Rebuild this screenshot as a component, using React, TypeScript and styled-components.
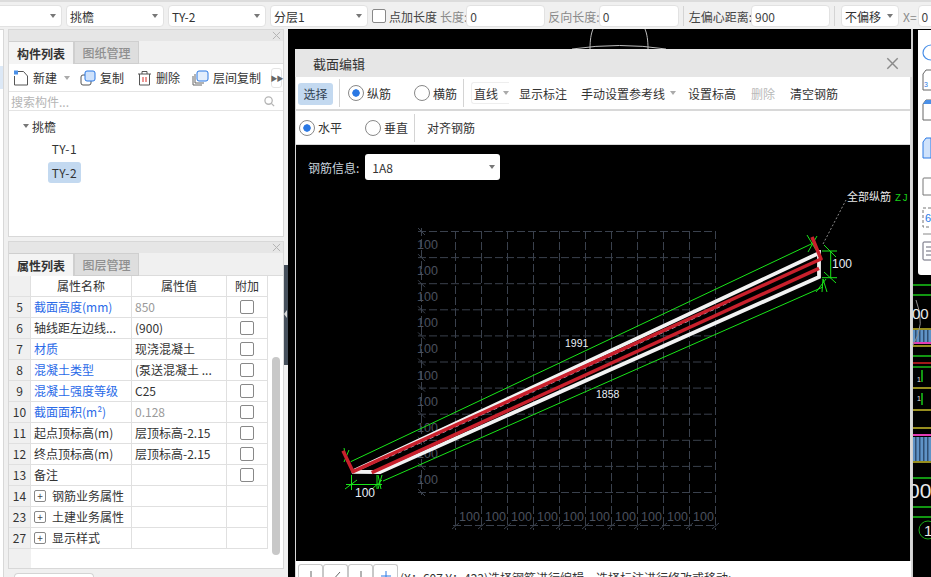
import React from 'react';
import styled, { createGlobalStyle } from 'styled-components';

const Global = createGlobalStyle`
  html, body { margin: 0; padding: 0; background: #f0f0f0; }
  * { box-sizing: border-box; }
  body { font-family: "Noto Sans CJK SC", "Liberation Sans", sans-serif; font-size: 12px; color: #333; }
`;

const Page = styled.div`
  width: 931px; height: 577px; overflow: hidden; display: flex; flex-direction: column; background: #f0f0f0;
`;
const TopBar = styled.div`
  height: 29px; flex: none; display: flex; align-items: center; gap: 4px; padding-top: 1px;
  border-top: 2px solid #dcdcdc; background: #f0f0f0; white-space: nowrap; margin-top: 0;
`;
const Sel = styled.div<{ $w: number }>`
  width: ${p => p.$w}px; height: 22px; flex: none; background: #fff; border: 1px solid #e2e2e2; border-radius: 4px;
  display: flex; align-items: center; justify-content: space-between; padding: 0 5px 0 3px; font-size: 12px; color: #333;
`;
const FirstSel = styled(Sel)`border-left: none; border-radius: 0 4px 4px 0;`;
const OffsetSel = styled(Sel)`margin-left: 2px;`;
const Caret = styled.i<{ $light?: boolean }>`
  width: 0; height: 0; border-left: 3px solid transparent; border-right: 3px solid transparent; border-top: 4px solid ${p => (p.$light ? '#aaa' : '#777')}; flex: none;
`;
const Check = styled.span<{ $size?: number }>`
  display: inline-block; width: ${p => p.$size ?? 13}px; height: ${p => p.$size ?? 13}px; background: #fff; border: 1px solid #888; border-radius: 2px; flex: none;
`;
const Lbl = styled.span<{ $muted?: boolean }>`
  color: ${p => (p.$muted ? '#8a8a8a' : '#444')}; font-size: 12px; flex: none; margin-right: -1px;
`;
const Inp = styled.div<{ $w: number }>`
  width: ${p => p.$w}px; height: 22px; flex: none; background: #fff; border: 1px solid #e2e2e2; border-radius: 4px; padding: 0 3px; display: flex; align-items: center; font-size: 12px; color: #444;
`;
const SmallInp = styled(Inp)`margin-left: 2px;`;
const VSep = styled.i<{ $h?: number }>`
  width: 1px; height: ${p => p.$h ?? 20}px; background: #d4d4d4; flex: none; display: block;
`;
const CheckGroup = styled.div`display: flex; align-items: center; gap: 3px; flex: none;`;
const LabelledField = styled.div<{ $ml?: number }>`display: flex; align-items: center; flex: none; margin-left: ${p => p.$ml ?? 0}px;`;

const Main = styled.div`flex: 1; display: flex; min-height: 0;`;
const Sidebar = styled.div`width: 288px; flex: none; display: flex; background: #f0f0f0;`;
const LeftStrip = styled.div`
  width: 4px; flex: none; background: #fff; border-right: 1px solid #d8d8d8; border-top: 1px solid #d8d8d8; padding-top: 36px;
`;
const StripMark = styled.div`height: 23px; width: 3px; background: #dce8f6;`;
const Panels = styled.div`flex: none; width: 276px; margin-left: 4px; display: flex; flex-direction: column; gap: 4px;`;
const Grip = styled.div`width: 4px; flex: none; display: flex; flex-direction: column; align-items: center; padding-top: 236px; margin-left: 0;`;
const GripBar = styled.div`
  width: 4px; height: 100px; background: #46505c; position: relative;
  &::after { content: ''; position: absolute; left: 0; top: 45px; border-right: 3px solid #d8d8d8; border-top: 4px solid transparent; border-bottom: 4px solid transparent; }
`;
const Panel = styled.section<{ $h: number }>`
  height: ${p => p.$h}px; flex: none; border: 1px solid #d8d8d8; background: #fff; display: flex; flex-direction: column;
`;
const PanelHead = styled.div`
  height: 11px; flex: none; background: #e6e6e6; display: flex; justify-content: flex-end; align-items: center; padding-right: 2px;
`;
const Tabs = styled.div`height: 23px; flex: none; display: flex; background: #f0f0f0; border-bottom: 1px solid #dcdcdc;`;
const Tab = styled.div<{ $active?: boolean }>`
  width: 65px; height: 23px; flex: none; display: flex; align-items: center; justify-content: center;
  font-size: 12px; font-weight: ${p => (p.$active ? 700 : 500)}; color: ${p => (p.$active ? '#333' : '#8f8f8f')};
  background: ${p => (p.$active ? '#f4f4f4' : '#dedede')}; border: 1px solid #cfcfcf; border-left: ${p => (p.$active ? 'none' : '1px solid #cfcfcf')};
  border-bottom: ${p => (p.$active ? 'none' : '1px solid #cfcfcf')};
`;
const ActionBar = styled.div`
  height: 28px; flex: none; display: flex; align-items: center; padding-left: 4px; border-bottom: 1px solid #e4e4e4; position: relative; white-space: nowrap;
`;
const Action = styled.div<{ $gap?: number }>`
  display: flex; align-items: center; gap: 4px; margin-right: ${p => p.$gap ?? 12}px; font-size: 12px; color: #333;
`;
const NewCaret = styled(Caret)`margin-left: 3px;`;
const More = styled.div`
  position: absolute; left: 262px; top: 4px; width: 11px; height: 20px; border: 1px solid #e4e4e4; border-radius: 3px; color: #666; font-size: 7px; display: flex; align-items: center; justify-content: center; background: #fff; letter-spacing: -1px;
`;
const Search = styled.div`
  height: 19px; flex: none; display: flex; align-items: center; justify-content: space-between; padding: 0 8px 0 2px; color: #b5b5b5; font-size: 12px; border-bottom: 1px solid #e4e4e4;
`;
const Tree = styled.div`flex: 1; padding: 3px 0 0 14px; display: flex; flex-direction: column; color: #333; font-size: 12px;`;
const TreeRoot = styled.div`height: 24px; display: flex; align-items: center; gap: 3px;`;
const TreeLeaf = styled.div<{ $sel?: boolean }>`
  width: 33px; height: 21px; margin: 0 0 3px 25px; display: flex; align-items: center; justify-content: center; border-radius: 3px; letter-spacing: 0.5px; background: ${p => (p.$sel ? '#c3d9f0' : 'transparent')};
`;

const Body = styled.div`flex: 1; display: flex; min-height: 0;`;
const Table = styled.div`
  width: 259px; flex: none; display: grid; grid-template-columns: 22px 101px 95px 41px; grid-auto-rows: 21px; align-content: start; background: linear-gradient(to right, #f0f0f0 22px, #fff 22px); position: relative;
`;
const Cell = styled.div<{ $c?: string; $center?: boolean; $idx?: boolean }>`
  border-right: 1px solid #e0e0e0; border-bottom: 1px solid #e0e0e0; display: flex; align-items: center; overflow: hidden; white-space: nowrap;
  padding: ${p => (p.$center ? 0 : '0 3px')}; justify-content: ${p => (p.$center || p.$idx ? 'center' : 'flex-start')};
  color: ${p => p.$c ?? '#333'}; background: ${p => (p.$idx ? '#f0f0f0' : '#fff')}; font-size: 12px; padding-bottom: 1px;
`;
const PlusBox = styled.span`
  width: 12px; height: 12px; border: 1px solid #888; border-radius: 2px; margin: 0 6px 0 0; display: inline-flex; align-items: center; justify-content: center; font-size: 10px; line-height: 1; color: #444; flex: none;
`;
const ScrollTrack = styled.div`width: 16px; flex: 1; position: relative; background: #fff;`;
const Thumb = styled.div`position: absolute; left: 4px; top: 81px; width: 8px; height: 198px; background: #c8c8c8; border-radius: 4px;`;
const TailButton = styled.div`
  width: 80px; height: 10px; margin-left: 6px; background: #fff; border: 1px solid #d4d4d4; border-bottom: none; border-radius: 4px 4px 0 0; flex: none;
`;

const Canvas = styled.div`flex: 1; background: #000; position: relative; min-width: 0; overflow: hidden;`;
const Backdrop = styled.svg`position: absolute; left: 0; top: 0;`;
const Palette = styled.div`
  position: absolute; left: 630px; top: 1px; width: 13px; height: 245px; background: #fff; border-radius: 0 0 0 3px; overflow: hidden;
`;
const PaletteSvg = styled.svg`display: block;`;
const Dialog = styled.div`
  position: absolute; left: 7px; top: 20px; width: 617px; height: 540px; background: #d8d8d8; display: flex; flex-direction: column; padding: 0 2px 0 1px;
`;
const DialogTitle = styled.div`
  height: 28px; flex: none; background: #e6e6e6; display: flex; align-items: center; justify-content: space-between; padding: 0 13px 0 18px; font-size: 13px; color: #333; margin: 0 -2px 0 -1px;
`;
const Bar = styled.div<{ $h: number }>`
  height: ${p => p.$h}px; flex: none; background: #fff; display: flex; align-items: center; margin-bottom: 2px; white-space: nowrap; font-size: 12px; color: #333;
`;
const SelectBtn = styled.div`
  width: 35px; height: 22px; margin: 1px 6px 0 2px; background: #c3d9f0; border-radius: 3px; display: flex; align-items: center; justify-content: center; color: #345;
`;
const Radio = styled.label<{ $on?: boolean; $mr: number; $ml?: number }>`
  display: flex; align-items: center; gap: 3px; margin: 0 ${p => p.$mr}px 0 ${p => p.$ml ?? 0}px;
  &::before { content: ''; width: 14px; height: 14px; border-radius: 50%; border: 1px solid #888; background: ${p => (p.$on ? 'radial-gradient(circle, #2a78e4 0 3.4px, #fff 4px)' : '#fff')}; flex: none; }
`;
const LineBtn = styled.div`
  height: 22px; width: 38px; border: 1px solid #eee; border-right: none; border-radius: 3px 0 0 3px; display: flex; align-items: center; padding-left: 2px; gap: 5px; margin: 0 10px 0 7px;
`;
const BarItem = styled.span<{ $mr?: number; $ml?: number; $off?: boolean }>`
  margin: 0 ${p => p.$mr ?? 14}px 0 ${p => p.$ml ?? 0}px; color: ${p => (p.$off ? '#b9b9b9' : '#333')}; display: inline-flex; align-items: center; gap: 5px;
`;
const Stage = styled.div`flex: 1; background: #000; position: relative; margin-top: -1px; min-height: 0;`;
const DrawingSvg = styled.svg`display: block; position: absolute; left: 0; top: 0;`;
const InfoRow = styled.div`
  position: absolute; left: 12px; top: 9px; display: flex; align-items: center; gap: 6px; color: #c9d3dd; font-size: 12px;
`;
const InfoSel = styled.div`
  width: 135px; height: 26px; background: #fff; border-radius: 3px; display: flex; align-items: center; justify-content: space-between; padding: 0 5px 0 7px; color: #333; font-size: 12px;
`;
const Status = styled.div`
  position: absolute; left: 8px; top: 532px; width: 615px; height: 20px; background: #fff; display: flex; align-items: flex-start; padding: 3px 0 0 2px; white-space: nowrap; font-size: 12px; color: #333; overflow: hidden;
`;
const ToolBtn = styled.div`
  width: 25px; height: 18px; border: 1px solid #c8c8c8; border-bottom: none; border-radius: 3px 3px 0 0; flex: none; display: flex; justify-content: center; padding-top: 2px; background: #fff;
`;
const StatusText = styled.span`margin-left: 2px; margin-top: 5px;`;

const X = ({ s = 9, c = '#b3b3b3' }: { s?: number; c?: string }) => (
  <svg width={s} height={s} viewBox="0 0 10 10"><path d="M1 1l8 8M9 1l-8 8" stroke={c} strokeWidth="1.1" fill="none" /></svg>
);
const NewIcon = () => (
  <svg width="16" height="16" viewBox="0 0 16 16"><path d="M1.5 6V15h13V6L10.5 1.5H5" fill="#fff" stroke="#555" /><rect x="1" y="0.5" width="4" height="4" fill="#4a90e8" /></svg>
);
const CopyIcon = () => (
  <svg width="16" height="16" viewBox="0 0 16 16"><rect x="1" y="5" width="10" height="10" rx="2" fill="#fff" stroke="#555" /><rect x="5" y="1" width="10" height="10" rx="2" fill="#cfe2fb" stroke="#2a78e4" /></svg>
);
const TrashIcon = () => (
  <svg width="15" height="16" viewBox="0 0 15 16"><path d="M1 4h13M5 4V1.5h5V4M2.5 4v11h10V4" fill="none" stroke="#555" /><path d="M6 7v5M9 7v5" stroke="#d9302a" /></svg>
);
const FloorIcon = () => (
  <svg width="17" height="16" viewBox="0 0 17 16"><path d="M1 6v9h9M3 4v9h9" fill="none" stroke="#666" /><rect x="5" y="1" width="11" height="10" rx="2" fill="#e3eefc" stroke="#2a78e4" /></svg>
);
const SearchIcon = () => (
  <svg width="11" height="11" viewBox="0 0 12 12"><circle cx="5" cy="5" r="4" fill="none" stroke="#b5b5b5" strokeWidth="1.4" /><path d="M8 8l3 3" stroke="#b5b5b5" strokeWidth="1.4" /></svg>
);

type Row = [string, string, string, string?, boolean?, boolean?];
const BLUE = '#2a6ae8';
const rows: Row[] = [
  ['5', '截面高度(mm)', '850', BLUE, false, true],
  ['6', '轴线距左边线...', '(900)', undefined, false, true],
  ['7', '材质', '现浇混凝土', BLUE, false, true],
  ['8', '混凝土类型', '(泵送混凝土 ...', BLUE, false, true],
  ['9', '混凝土强度等级', 'C25', BLUE, false, true],
  ['10', '截面面积(m²)', '0.128', BLUE, false, true],
  ['11', '起点顶标高(m)', '层顶标高-2.15', undefined, false, true],
  ['12', '终点顶标高(m)', '层顶标高-2.15', undefined, false, true],
  ['13', '备注', '', undefined, false, true],
  ['14', '钢筋业务属性', '', undefined, true, false],
  ['23', '土建业务属性', '', undefined, true, false],
  ['27', '显示样式', '', undefined, true, false],
];

const range = (n: number) => Array.from({ length: n }, (_, i) => i);
const GRID = '#3a414d';

// coordinates below are page coordinates; the stage sits at (296,145)
const Drawing = () => (
  <DrawingSvg width="615" height="418" viewBox="296 145 615 418">
    <g stroke={GRID} strokeWidth="1" strokeDasharray="8 3" fill="none">
      {range(11).map(i => <line key={i} x1="418" x2="715" y1={231.5 + i * 26.1} y2={231.5 + i * 26.1} />)}
      {range(11).map(i => <line key={i} x1={455.5 + i * 26} x2={455.5 + i * 26} y1="231" y2="530" />)}
      <line x1="421.5" x2="421.5" y1="228" y2="495" />
      <line x1="453" x2="715" y1="525.5" y2="525.5" />
    </g>
    <g stroke={GRID} strokeWidth="1">
      {range(11).map(i => <line key={i} x1="418" x2="425" y1={228 + i * 26.1} y2={235 + i * 26.1} />)}
      {range(11).map(i => <line key={i} x1={452 + i * 26} x2={459 + i * 26} y1="529" y2="523" />)}
    </g>
    <g fill="#4a515e" fontFamily="'Liberation Sans', sans-serif" fontSize="12.5">
      {range(10).map(i => <text key={i} x="417" y={249 + i * 26.1}>100</text>)}
      {range(10).map(i => <text key={i} x={459 + i * 26} y="521">100</text>)}
    </g>
    <g stroke="#19e619" strokeWidth="1" fill="none">
      <line x1="350.7" y1="461.7" x2="812.7" y2="243.3" />
      <line x1="383" y1="481" x2="823" y2="287" />
      <path d="M351.5 475v15M377 475v14M346 484.5h36M345 489l12-9M372 489l10-9M378 475l3 14M382 475l-4 14" />
      <path d="M830.7 251v27M822 251h15M822 277.7h15M824 245l12 12M824 272l12 11" />
      <path d="M817 236l-9 16M807 235l9 15M344 448l3 14M349 450l-5 12M823 279l-1 13M823 279l4 13M816 292l10-13" />
    </g>
    <line x1="385" y1="458.6" x2="730" y2="301.7" stroke="#b9cdea" strokeWidth="1.6" strokeDasharray="4 3" />
    <g stroke="#f2f2f2" strokeWidth="3.8" fill="none" strokeLinecap="square">
      <path d="M817 254L352 471.8L380 472L819 277L819 252" />
    </g>
    <g stroke="#c8202c" strokeWidth="3.5" fill="none" strokeLinejoin="round">
      <path d="M343 450.7L353 471.7L821 259L812 237" />
      <line x1="371.7" y1="472.7" x2="819" y2="268.3" />
    </g>
    <line x1="823" y1="244" x2="846" y2="200" stroke="#8a8a8a" strokeDasharray="2 2" />
    <g fontFamily="'Liberation Sans', sans-serif" fontSize="10.5" fill="#e8eef6">
      <text x="565" y="347">1991</text>
      <text x="596" y="398">1858</text>
    </g>
    <g fontFamily="'Liberation Sans', sans-serif" fontSize="12" fill="#e8eef6">
      <text x="355" y="497">100</text>
      <text x="832" y="268">100</text>
    </g>
    <text x="847" y="201" fill="#e8e8e8" fontSize="11" fontFamily="'Noto Sans CJK SC', sans-serif">全部纵筋</text>
    <text x="895" y="201" fill="#19d219" fontSize="10" letterSpacing="1" fontFamily="'Liberation Mono', monospace">ZJ</text>
  </DrawingSvg>
);

const Stripes = ({ y, h }: { y: number; h: number }) => (
  <g>
    <rect x="913" y={y} width="18" height={h} fill="#5f93c6" />
    {range(4).map(i => <rect key={i} x={915 + i * 4} y={y} width="1.5" height={h} fill="#2f4f72" />)}
  </g>
);

const CadBackdrop = () => (
  <Backdrop width="643" height="548" viewBox="288 29 643 548">
    <path d="M590 49C590 40 591 34 593 29M648 49C648 40 647 34 645 29M572 49Q620 42 666 49" stroke="#bdbdbd" fill="none" />
    <rect x="911" y="29" width="2" height="548" fill="#cfcfcf" />
    <Stripes y={330} h={12} />
    <Stripes y={437} h={24} />
    <g fill="none">
      <path d="M913 285h18M913 295h18M913 356h18M913 478h18M913 507h18M913 517h18" stroke="#19c819" strokeWidth="1.5" />
      <path d="M913 367h18" stroke="#128a12" strokeWidth="2" />
      <path d="M913 363h18" stroke="#a01818" strokeWidth="2" />
      <path d="M913 343h18M913 435h18" stroke="#e33cb4" strokeWidth="2" />
      <path d="M913 329h18M913 346h18M913 428h18M913 462h18M913 388h18M913 410h18" stroke="#c9bd2a" strokeWidth="1.5" />
      <path d="M922 370v12M922 393v12" stroke="#19c819" strokeWidth="1.5" />
      <circle cx="928" cy="530" r="9" stroke="#19a819" strokeWidth="1" />
      <path d="M916 300Q926 325 913 345" stroke="#909090" strokeWidth="1" />
    </g>
    <g fill="#e8e8e8" fontFamily="'Liberation Sans', sans-serif">
      <text x="912" y="319" fontSize="15">00</text>
      <text x="908" y="498" fontSize="21">00</text>
      <text x="924" y="536" fontSize="15">1</text>
      <text x="917" y="382" fontSize="7">1</text>
      <text x="917" y="401" fontSize="7">1</text>
    </g>
  </Backdrop>
);

const PaletteIcons = () => (
  <PaletteSvg width="13" height="245" viewBox="918 30 13 245">
    <g fill="none">
      <path d="M931 45a8 8 0 0 0-8 8c0 4 4 7 8 7" stroke="#4a90e8" strokeWidth="1.2" />
      <path d="M931 70h-5l-3 4v16h8" stroke="#666" />
      <text x="924" y="87" fontSize="7" fill="#2a78e4" fontFamily="'Liberation Sans', sans-serif">3</text>
      <path d="M931 100h-5l-3 4v16h8" stroke="#666" />
      <path d="M931 100h-5l-3 4h8z" fill="#4a90e8" />
      <path d="M931 138h-5l-3 4v16h8z" stroke="#2a78e4" fill="#cfe2fb" />
      <path d="M931 178h-7a1 1 0 0 0-1 1v16h8" stroke="#777" />
      <path d="M931 208h-8v19h8" stroke="#777" strokeDasharray="3 2" />
      <text x="925" y="222" fontSize="11" fill="#2a78e4" fontFamily="'Liberation Sans', sans-serif">6</text>
      <path d="M923 234h8" stroke="#888" />
      <path d="M931 242h-7a1 1 0 0 0-1 1v16a1 1 0 0 0 1 1h7" stroke="#667" />
      <path d="M926 247h5M926 251h5M926 255h5" stroke="#667" />
    </g>
  </PaletteSvg>
);

export default function App() {
  return (
    <Page>
      <Global />
      <TopBar>
        <FirstSel $w={62}><span /><Caret /></FirstSel>
        <Sel $w={98}><span>挑檐</span><Caret /></Sel>
        <Sel $w={98}><span>TY-2</span><Caret /></Sel>
        <Sel $w={98}><span>分层1</span><Caret /></Sel>
        <CheckGroup><Check $size={14} /><Lbl>点加长度</Lbl></CheckGroup>
        <LabelledField><Lbl $muted>长度:</Lbl><Inp $w={79}>0</Inp></LabelledField>
        <LabelledField $ml={-1}><Lbl $muted>反向长度:</Lbl><Inp $w={80}>0</Inp></LabelledField>
        <VSep />
        <LabelledField $ml={1}><Lbl>左偏心距离:</Lbl><Inp $w={79}>900</Inp></LabelledField>
        <VSep />
        <OffsetSel $w={58}><span>不偏移</span><Caret /></OffsetSel>
        <LabelledField><Lbl $muted>X=</Lbl><SmallInp $w={20}>0</SmallInp></LabelledField>
      </TopBar>
      <Main>
        <Sidebar>
          <LeftStrip><StripMark /></LeftStrip>
          <Panels>
            <Panel $h={208}>
              <PanelHead><X /></PanelHead>
              <Tabs><Tab $active>构件列表</Tab><Tab>图纸管理</Tab></Tabs>
              <ActionBar>
                <Action $gap={10}><NewIcon />新建<NewCaret $light /></Action>
                <Action $gap={13}><CopyIcon />复制</Action>
                <Action $gap={12}><TrashIcon />删除</Action>
                <Action><FloorIcon />层间复制</Action>
                <More>▶▶</More>
              </ActionBar>
              <Search><span>搜索构件...</span><SearchIcon /></Search>
              <Tree>
                <TreeRoot><Caret />挑檐</TreeRoot>
                <TreeLeaf>TY-1</TreeLeaf>
                <TreeLeaf $sel>TY-2</TreeLeaf>
              </Tree>
            </Panel>
            <Panel $h={328}>
              <PanelHead><X /></PanelHead>
              <Tabs><Tab $active>属性列表</Tab><Tab>图层管理</Tab></Tabs>
              <Body>
                <Table>
                  <Cell $idx />
                  <Cell $center>属性名称</Cell>
                  <Cell $center>属性值</Cell>
                  <Cell $center>附加</Cell>
                  {rows.map(([n, name, val, color, plus, chk]) => (
                    <React.Fragment key={n}>
                      <Cell $idx>{n}</Cell>
                      <Cell $c={color}>{plus && <PlusBox>+</PlusBox>}{name}</Cell>
                      <Cell $c={val === '850' || val === '0.128' ? '#9a9a9a' : undefined}>{val}</Cell>
                      <Cell $center>{chk && <Check $size={14} />}</Cell>
                    </React.Fragment>
                  ))}
                </Table>
                <ScrollTrack><Thumb /></ScrollTrack>
              </Body>
            </Panel>
            <TailButton />
          </Panels>
          <Grip><GripBar /></Grip>
        </Sidebar>
        <Canvas>
          <CadBackdrop />
          <Dialog>
            <DialogTitle>截面编辑<X s={13} c="#8a8a8a" /></DialogTitle>
            <Bar $h={32}>
              <SelectBtn>选择</SelectBtn>
              <VSep $h={28} />
              <Radio $on $mr={23} $ml={8}>纵筋</Radio>
              <Radio $mr={6}>横筋</Radio>
              <VSep $h={28} />
              <LineBtn>直线<Caret $light /></LineBtn>
              <BarItem>显示标注</BarItem>
              <BarItem $mr={12}>手动设置参考线<Caret $light /></BarItem>
              <BarItem $mr={15}>设置标高</BarItem>
              <BarItem $off $mr={15}>删除</BarItem>
              <BarItem>清空钢筋</BarItem>
            </Bar>
            <Bar $h={33}>
              <Radio $on $mr={23} $ml={3}>水平</Radio>
              <Radio $mr={6}>垂直</Radio>
              <VSep $h={28} />
              <BarItem $ml={12}>对齐钢筋</BarItem>
            </Bar>
            <Stage>
              <Drawing />
              <InfoRow>钢筋信息:<InfoSel>1A8<Caret /></InfoSel></InfoRow>
            </Stage>
          </Dialog>
          <Status>
            <ToolBtn><svg width="12" height="14"><path d="M6 4v10" stroke="#666" /></svg></ToolBtn>
            <ToolBtn><svg width="12" height="14"><path d="M2 14L10 5" stroke="#666" /></svg></ToolBtn>
            <ToolBtn><svg width="12" height="14"><path d="M6 4v10" stroke="#666" /></svg></ToolBtn>
            <ToolBtn><svg width="12" height="14"><path d="M6 4v10M1 9h10" stroke="#2a78e4" /></svg></ToolBtn>
            <StatusText>(X：607 Y：423)选择钢筋进行编辑，选择标注进行修改或移动;</StatusText>
          </Status>
          <Palette><PaletteIcons /></Palette>
        </Canvas>
      </Main>
    </Page>
  );
}
